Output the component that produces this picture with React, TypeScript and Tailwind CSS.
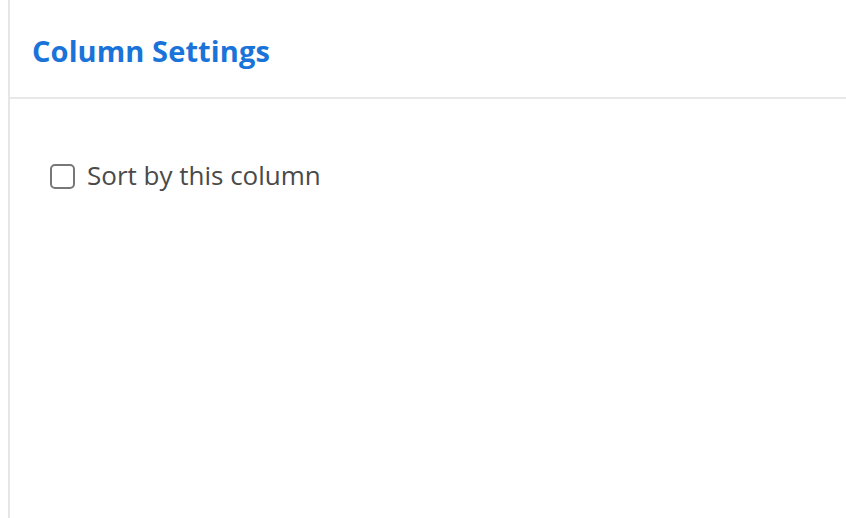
export default function App() {
  return (
    <div className="h-[518px] w-[846px] bg-white overflow-hidden" style={{ fontFamily: '"Open Sans", "Liberation Sans", sans-serif' }}>
      <div className="ml-2 h-full border-l-2 border-[#e6e6e6]">
        {/* header */}
        <div className="flex h-[99px] items-center border-b-2 border-[#e8e8e8] pl-[22px] pt-1">
          <h1 className="text-[29px] font-bold tracking-[0.1px] text-[#1a73d9]">Column Settings</h1>
        </div>

        {/* body */}
        <div className="pl-10 pt-[57px]">
          <label className="flex items-center gap-3">
            <span className="mt-[1px] h-[25px] w-[25px] shrink-0 rounded-[5px] border-2 border-[#777777] bg-white" />
            <span className="text-[26px] text-[#4a4a4a]">Sort by this column</span>
          </label>
        </div>
      </div>
    </div>
  );
}
